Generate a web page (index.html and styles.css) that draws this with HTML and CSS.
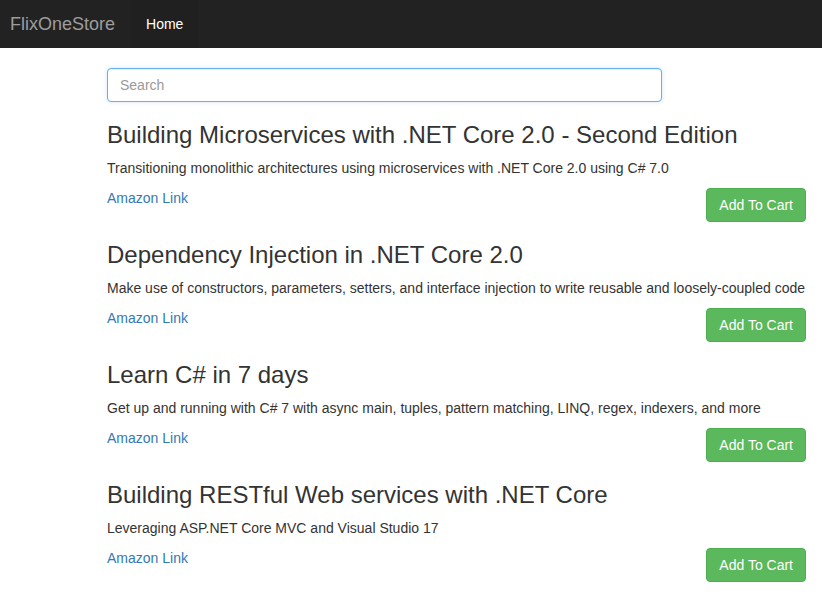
FILE: index.html
```html
<!DOCTYPE html>
<html lang="en">
<head>
<meta charset="utf-8">
<title>FlixOneStore</title>
<link rel="stylesheet" href="styles.css">
</head>
<body>
<nav class="navbar">
  <a class="brand" href="#">FlixOneStore</a>
  <a class="nav-link active" href="#">Home</a>
</nav>
<main class="container">
  <input class="search" type="text" placeholder="Search">
  <section class="product">
    <h3>Building Microservices with .NET Core 2.0 - Second Edition</h3>
    <p>Transitioning monolithic architectures using microservices with .NET Core 2.0 using C# 7.0</p>
    <div class="row">
      <a class="link" href="#">Amazon Link</a>
      <button class="btn">Add To Cart</button>
    </div>
  </section>
  <section class="product">
    <h3>Dependency Injection in .NET Core 2.0</h3>
    <p>Make use of constructors, parameters, setters, and interface injection to write reusable and loosely-coupled code</p>
    <div class="row">
      <a class="link" href="#">Amazon Link</a>
      <button class="btn">Add To Cart</button>
    </div>
  </section>
  <section class="product">
    <h3>Learn C# in 7 days</h3>
    <p>Get up and running with C# 7 with async main, tuples, pattern matching, LINQ, regex, indexers, and more</p>
    <div class="row">
      <a class="link" href="#">Amazon Link</a>
      <button class="btn">Add To Cart</button>
    </div>
  </section>
  <section class="product">
    <h3>Building RESTful Web services with .NET Core</h3>
    <p>Leveraging ASP.NET Core MVC and Visual Studio 17</p>
    <div class="row">
      <a class="link" href="#">Amazon Link</a>
      <button class="btn">Add To Cart</button>
    </div>
  </section>
</main>
</body>
</html>
```

FILE: styles.css
```css
* { box-sizing: border-box; }
html, body { margin: 0; padding: 0; }
body {
  font-family: "Liberation Sans", Arial, sans-serif;
  font-size: 14px;
  line-height: 20px;
  color: #333;
  background: #fff;
}
.navbar {
  height: 48px;
  background: #222;
  display: flex;
  align-items: stretch;
}
.brand {
  display: flex;
  align-items: center;
  padding: 0 16px 0 10px;
  font-size: 18px;
  color: #9d9d9d;
  text-decoration: none;
}
.nav-link {
  display: flex;
  align-items: center;
  padding: 0 15px;
  color: #fff;
  text-decoration: none;
  background: #202020;
}
.container {
  padding: 20px 16px 0 107px;
}
.search {
  display: block;
  width: 555px;
  height: 34px;
  padding: 6px 12px;
  font-family: inherit;
  font-size: 14px;
  color: #555;
  border: 1px solid #66afe9;
  border-radius: 4px;
  outline: none;
  box-shadow: inset 0 1px 1px rgba(0,0,0,.075), 0 0 4px rgba(102,175,233,.3);
}
.search::placeholder { color: #999; }
.product h3 {
  margin: 20px 0 10px;
  font-size: 24px;
  font-weight: 500;
  line-height: 26px;
}
.product p {
  margin: 0 0 10px;
  white-space: nowrap;
}
.row {
  display: flex;
  justify-content: space-between;
  align-items: flex-start;
}
.link {
  color: #337ab7;
  text-decoration: none;
}
.btn {
  height: 34px;
  padding: 6px 12px;
  font-family: inherit;
  font-size: 14px;
  line-height: 20px;
  color: #fff;
  background: #5cb85c;
  border: 1px solid #4cae4c;
  border-radius: 4px;
}
```
